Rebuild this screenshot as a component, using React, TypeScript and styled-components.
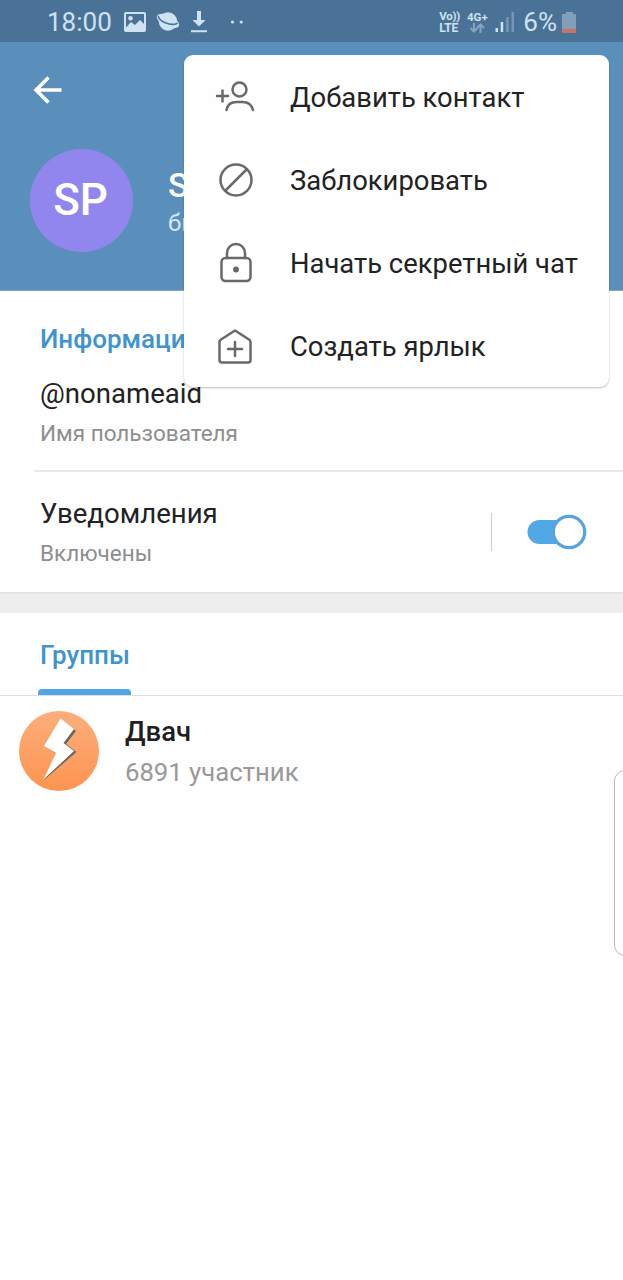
import React from 'react';
import styled, { createGlobalStyle } from 'styled-components';

const Global = createGlobalStyle`
  * { box-sizing: border-box; }
  body { margin: 0; background: #fff; font-family: Roboto, "Noto Sans", sans-serif; overflow: hidden; }
  svg { display: block; flex: none; }
`;

const Screen = styled.main`
  position: relative;
  width: 623px;
  height: 1280px;
  overflow: hidden;
  background: #fefefe;
`;

const StatusBar = styled.div`
  display: flex;
  align-items: center;
  height: 42px;
  padding: 2px 46px 0 47px;
  background: #497296;
  color: #cfe2f2;
`;

const StatusText = styled.span`
  font-size: 26px;
  line-height: 30px;
`;

const StatusIcons = styled.div`
  display: flex;
  align-items: center;
  gap: 10px;
  margin-left: 12px;
`;

const StatusRight = styled.div`
  display: flex;
  align-items: center;
  margin-left: auto;
`;

const VoLte = styled.div`
  display: flex;
  flex-direction: column;
  gap: 1px;
  width: 27px;
  font-weight: 700;
  white-space: nowrap;
`;

const VoLteLine = styled.span<{ $size: number; $spacing: number }>`
  height: 11px;
  font-size: ${p => p.$size}px;
  line-height: 11px;
  letter-spacing: ${p => p.$spacing}px;
`;

const Network = styled.div`
  display: flex;
  flex-direction: column;
  align-items: center;
  width: 22px;
  margin-right: 7px;
  font-size: 11.5px;
  font-weight: 700;
  line-height: 12px;
`;

const Percent = styled(StatusText)`
  margin: 0 5px 0 8px;
`;

const Header = styled.header`
  height: 249px;
  background: #5b8fbb;
  border-bottom: 1px solid #7fa6c9;
  padding: 33px 30px 0;
`;

const Identity = styled.div`
  display: flex;
  align-items: center;
  margin-top: 44px;
`;

const Avatar = styled.div`
  display: grid;
  place-items: center;
  width: 103px;
  height: 103px;
  margin-right: 35px;
  padding: 0 2px 1px 0;
  border-radius: 50%;
  background: #9186ee;
  color: #fff;
  font-size: 44px;
  font-weight: 500;
`;

const Name = styled.div`
  padding-top: 5px;
  color: #fff;
  font-size: 34px;
  line-height: 40px;
  font-weight: 500;
`;

const Presence = styled.div`
  color: #d3e7f7;
  font-size: 24px;
  line-height: 36px;
`;

const Section = styled.section`
  padding: 29px 0 0 40px;
`;

const SectionTitle = styled.h2`
  margin: 0;
  color: #3f94cf;
  font-size: 26px;
  line-height: 38px;
  font-weight: 500;
`;

const Primary = styled.div`
  color: #222;
  font-size: 27.6px;
  line-height: 40px;
`;

const Secondary = styled.div`
  color: #8c8e90;
  font-size: 22.5px;
  line-height: 39px;
`;

const UserField = styled.div`
  height: 112px;
  padding-top: 16px;
`;

const Divider = styled.div`
  height: 2px;
  margin-left: -6px;
  background: #e8e8e8;
`;

const Notifications = styled.div`
  display: flex;
  height: 120px;
  padding: 22px 36px 0 0;
`;

const ToggleArea = styled.div`
  display: flex;
  align-items: center;
  justify-content: flex-end;
  width: 96px;
  height: 38px;
  margin: 19px 0 0 auto;
  border-left: 1px solid #ccc;
`;

const Gap = styled.div`
  height: 21px;
  background: #eee;
  border-top: 2px solid #e5e5e5;
`;

const Tabs = styled.nav`
  height: 83px;
  padding: 23px 38px 0;
  border-bottom: 1px solid #dfdfdf;
`;

const Tab = styled.div`
  display: flex;
  flex-direction: column;
  justify-content: space-between;
  width: 93px;
  height: 59px;
  padding-left: 2px;
  &::after {
    content: '';
    height: 6px;
    margin-left: -2px;
    border-radius: 4px 4px 0 0;
    background: #50a6e5;
  }
`;

const GroupRow = styled.div`
  display: flex;
  gap: 26px;
  padding: 15px 19px;
`;

const GroupName = styled.div`
  padding-top: 1px;
  color: #202020;
  font-size: 27.5px;
  line-height: 40px;
  font-weight: 500;
`;

const Members = styled.div`
  color: #999;
  font-size: 25.7px;
  line-height: 40px;
`;

const Menu = styled.div`
  position: absolute;
  left: 184px;
  top: 55px;
  width: 425px;
  padding-top: 1px;
  height: 332px;
  border-radius: 9px;
  background: #fefefe;
  box-shadow: 0 1px 2px rgba(0, 0, 0, 0.25);
`;

const MenuItem = styled.div`
  display: flex;
  align-items: center;
  height: 83px;
  padding-left: 29px;
  gap: 31px;
  color: #222;
  font-size: 27.4px;
  white-space: nowrap;
`;

const EdgePanel = styled.div`
  position: absolute;
  left: 614px;
  top: 770px;
  width: 24px;
  height: 186px;
  border: 1px solid #bbb;
  border-radius: 11px;
  background: #fefefe;
`;

const MenuIcon = ({ children }: { children: React.ReactNode }) => (
  <svg width="46" height="46" viewBox="0 0 46 46" fill="none" stroke="#67696e" strokeWidth="2.5" strokeLinecap="round" strokeLinejoin="round">
    {children}
  </svg>
);

export default function App() {
  return (
    <>
      <Global />
      <Screen>
        <StatusBar>
          <StatusText>18:00</StatusText>
          <StatusIcons>
            <svg width="22" height="20" viewBox="0 0 22 20">
              <path fill="#cfe2f2" fillRule="evenodd" d="M2 0h18a2 2 0 0 1 2 2v16a2 2 0 0 1-2 2H2a2 2 0 0 1-2-2V2a2 2 0 0 1 2-2ZM2 2v13.500l5-5.500 4 3 5-5 4 4V2ZM6.500 4a2.300 2.300 0 1 1 0 4.600 2.300 2.300 0 0 1 0-4.600Z" />
            </svg>
            <svg width="24" height="20" viewBox="0 0 24 20">
              <circle cx="12" cy="9.500" r="9.200" fill="#cfe2f2" />
              <ellipse cx="12" cy="9" rx="12" ry="5.600" transform="rotate(25 12 9)" fill="#cfe2f2" />
              <path d="M2.500 4.500C3 9 14 14.500 21 11.500" fill="none" stroke="#497296" strokeWidth="1.600" strokeLinecap="round" />
            </svg>
            <svg width="18" height="22" viewBox="0 0 18 22">
              <path d="M7 0h4v9h4.500L9 15.500 2.500 9H7ZM1 19.300h16v2H1Z" fill="#cfe2f2" />
            </svg>
            <svg width="32" height="20" viewBox="0 0 32 20" fill="#cfe2f2">
              <circle cx="14.500" cy="10" r="1.600" />
              <circle cx="23.200" cy="10" r="1.600" />
            </svg>
          </StatusIcons>
          <StatusRight>
            <VoLte>
              <VoLteLine $size={11.5} $spacing={-0.3}>Vo))</VoLteLine>
              <VoLteLine $size={12} $spacing={-0.2}>LTE</VoLteLine>
            </VoLte>
            <Network>
              4G+
              <svg width="16" height="10" viewBox="0 0 16 10" fill="none" stroke="#86a5bf" strokeWidth="2">
                <path d="M5 0v8M1.500 5 5 8.500 8.500 5M11.500 10V2M8 5l3.500-3.500L15 5" />
              </svg>
            </Network>
            <svg width="20" height="20" viewBox="0 0 20 20">
              <path d="M.500 16h2.500v4h-2.500ZM5.700 10h2.500v10H5.700Z" fill="#cfe2f2" />
              <path d="M11.200 5h2.500v15h-2.500ZM16.500 0h2.500v20h-2.500Z" fill="#7798b4" />
            </svg>
            <Percent>6%</Percent>
            <svg width="15" height="21" viewBox="0 0 15 21">
              <path d="M4 0h7v2h3v19H0V2h4Z" fill="#819fb9" />
              <path d="M0 17h14v4H0Z" fill="#cc7165" />
            </svg>
          </StatusRight>
        </StatusBar>

        <Header>
          <svg width="34" height="30" viewBox="0 0 34 30" fill="none" stroke="#fff" strokeWidth="3.500">
            <path d="M31.500 15H7M18.500 2.500 6 15l12.500 12.500" />
          </svg>
          <Identity>
            <Avatar>SP</Avatar>
            <div>
              <Name>SP</Name>
              <Presence>был(а) недавно</Presence>
            </div>
          </Identity>
        </Header>

        <Section>
          <SectionTitle>Информация</SectionTitle>
          <UserField>
            <Primary>@nonameaid</Primary>
            <Secondary>Имя пользователя</Secondary>
          </UserField>
          <Divider />
          <Notifications>
            <div>
              <Primary>Уведомления</Primary>
              <Secondary>Включены</Secondary>
            </div>
            <ToggleArea>
              <svg width="60" height="36" viewBox="0 0 60 36">
                <rect x="0.500" y="6" width="50" height="24" rx="12" fill="#50a8e5" />
                <circle cx="42" cy="18" r="15.700" fill="#fff" stroke="#58a4dc" strokeWidth="3.300" />
              </svg>
            </ToggleArea>
          </Notifications>
        </Section>

        <Gap />
        <Tabs>
          <Tab><SectionTitle>Группы</SectionTitle></Tab>
        </Tabs>
        <GroupRow>
          <svg width="80" height="80" viewBox="0 0 80 80">
            <defs>
              <linearGradient id="orange" x1="0" y1="0" x2="0" y2="1">
                <stop offset="0" stopColor="#fcae7c" />
                <stop offset="1" stopColor="#fd9450" />
              </linearGradient>
            </defs>
            <circle cx="40" cy="40" r="40" fill="url(#orange)" />
            <path d="M43 9 57 20 47 33 57.500 41 25 69 38 43 27 36Z" fill="#6c6762" />
            <path d="M41.500 7.500 55 18 44.500 32 55 40 24.500 68.500 37 42 25 35Z" fill="#fff" />
          </svg>
          <div>
            <GroupName>Двач</GroupName>
            <Members>6891 участник</Members>
          </div>
        </GroupRow>

        <EdgePanel />

        <Menu>
          <MenuItem>
            <MenuIcon>
              <circle cx="26.500" cy="14.500" r="7" />
              <path d="M4 21h11M9.500 15.500v11M13.500 35c1-6 5-8 10-8h6c5 0 9 2 10.500 8" />
            </MenuIcon>
            Добавить контакт
          </MenuItem>
          <MenuItem>
            <MenuIcon>
              <circle cx="23" cy="22" r="15.500" />
              <path d="M12.500 32.500 33.500 11.500" />
            </MenuIcon>
            Заблокировать
          </MenuItem>
          <MenuItem>
            <MenuIcon>
              <rect x="8.500" y="17" width="29" height="23" rx="4" />
              <path d="M14 17v-5a9 9 0 0 1 18 0v5" />
              <circle cx="23" cy="28.500" r="1.700" fill="#67696e" />
            </MenuIcon>
            Начать секретный чат
          </MenuItem>
          <MenuItem>
            <MenuIcon>
              <path d="M22 6.500 36 15.500q1.500 1 1.500 2.500v18q0 2.500-2.500 2.500H9q-2.500 0-2.500-2.500V18q0-1.500 1.500-2.500ZM15 25h14M22 18v14" />
            </MenuIcon>
            Создать ярлык
          </MenuItem>
        </Menu>
      </Screen>
    </>
  );
}
